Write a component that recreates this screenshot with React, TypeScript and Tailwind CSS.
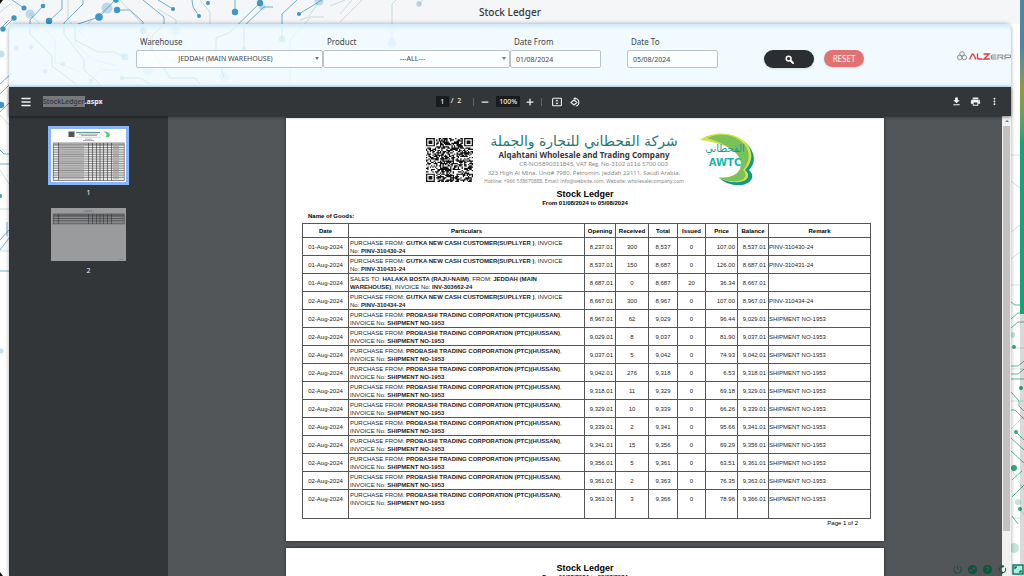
import { useMemo, useState } from 'react'
import { Menu, Minus, Plus, Search } from 'lucide-react'
import { MdAutorenew, MdFileDownload, MdHelp, MdMoreVert, MdPowerSettingsNew, MdPrint, MdSwapHorizontalCircle } from 'react-icons/md'

type Row = {
  date: string
  kind?: 'invoice' | 'sale'
  opening: string
  received: string
  total: string
  issued: string
  price: string
  balance: string
  remark: string
}

const SHIPMENT = 'SHIPMENT NO-1953'

const rows: Row[] = [
  { date: '01-Aug-2024', kind: 'invoice', opening: '8,237.01', received: '300', total: '8,537', issued: '0', price: '107.00', balance: '8,537.01', remark: 'PINV-310430-24' },
  { date: '01-Aug-2024', kind: 'invoice', opening: '8,537.01', received: '150', total: '8,687', issued: '0', price: '126.00', balance: '8,687.01', remark: 'PINV-310431-24' },
  { date: '01-Aug-2024', kind: 'sale', opening: '8,687.01', received: '0', total: '8,687', issued: '20', price: '36.34', balance: '8,667.01', remark: '' },
  { date: '02-Aug-2024', kind: 'invoice', opening: '8,667.01', received: '300', total: '8,967', issued: '0', price: '107.00', balance: '8,967.01', remark: 'PINV-310434-24' },
  { date: '02-Aug-2024', opening: '8,967.01', received: '62', total: '9,029', issued: '0', price: '96.44', balance: '9,029.01', remark: SHIPMENT },
  { date: '02-Aug-2024', opening: '9,029.01', received: '8', total: '9,037', issued: '0', price: '81.90', balance: '9,037.01', remark: SHIPMENT },
  { date: '02-Aug-2024', opening: '9,037.01', received: '5', total: '9,042', issued: '0', price: '74.93', balance: '9,042.01', remark: SHIPMENT },
  { date: '02-Aug-2024', opening: '9,042.01', received: '276', total: '9,318', issued: '0', price: '6.53', balance: '9,318.01', remark: SHIPMENT },
  { date: '02-Aug-2024', opening: '9,318.01', received: '11', total: '9,329', issued: '0', price: '69.18', balance: '9,329.01', remark: SHIPMENT },
  { date: '02-Aug-2024', opening: '9,329.01', received: '10', total: '9,339', issued: '0', price: '66.26', balance: '9,339.01', remark: SHIPMENT },
  { date: '02-Aug-2024', opening: '9,339.01', received: '2', total: '9,341', issued: '0', price: '95.66', balance: '9,341.01', remark: SHIPMENT },
  { date: '02-Aug-2024', opening: '9,341.01', received: '15', total: '9,356', issued: '0', price: '69.29', balance: '9,356.01', remark: SHIPMENT },
  { date: '02-Aug-2024', opening: '9,356.01', received: '5', total: '9,361', issued: '0', price: '63.51', balance: '9,361.01', remark: SHIPMENT },
  { date: '02-Aug-2024', opening: '9,361.01', received: '2', total: '9,363', issued: '0', price: '76.35', balance: '9,363.01', remark: SHIPMENT },
  { date: '02-Aug-2024', opening: '9,363.01', received: '3', total: '9,366', issued: '0', price: '78.96', balance: '9,366.01', remark: SHIPMENT },
]

// [x, y, radius, opacity]
const dots = [
  [24, 8, 2.5, 1], [43, 6, 2.3, 1], [14, 18, 2.7, 1], [3, 29, 2.7, 1], [49, 21, 3.2, 1], [99, 17, 3.8, 1],
  [30, 14, 4.5, 0.3], [107, 8, 5.5, 0.3], [117, 10, 3.2, 1], [116, 0, 2.8, 1], [143, 31, 3.2, 0.5], [173, 9, 2, 1],
  [199, 16, 2, 1], [208, 3, 2, 1], [235, 12, 3.2, 1], [260, 3, 3.2, 1], [244, 49, 2, 0.5], [282, 39, 3.2, 0.5],
  [299, 14, 2, 1], [319, 1, 4.5, 0.3], [262, 7, 3, 0.3], [419, 4, 2.7, 0.35], [392, 43, 4.5, 0.3], [176, 30, 4.5, 0.3],
  [16, 48, 2.5, 0.5], [31, 47, 2.2, 0.5], [63, 64, 2.2, 0.5], [45, 71, 2.2, 0.5], [125, 57, 3.5, 0.5], [91, 81, 2.3, 0.5],
  [122, 78, 2.2, 0.5], [174, 61, 3, 0.3], [148, 70, 5, 0.2], [224, 77, 5, 0.2], [1, 54, 3.5, 0.3], [1, 105, 3.2, 1],
  [0, 196, 2, 1], [1, 351, 2.5, 0.3],
]

function Circuits() {
  return (
    <svg className="absolute left-0 top-0" width="1024" height="576" viewBox="0 0 1024 576" fill="none" aria-hidden="true">
      <g stroke="#4f9cc6" strokeWidth="0.8">
        <path d="M24 8 12 0M43 6 30 20V34L52 56V66L76 84M14 18 3 29M62 0V9L49 21M83 0V4L64 23V34L84 60V70L100 84" />
        <path d="M99 17 115 0M99 17 75 25V40L98 52H114L125 57M117 10H130L143 22V31M143 0 164 17V24L152 36V50L170 78H195L200 84" />
        <path d="M158 0 173 9M192 0 193 7 199 16M235 12V0M260 3 229 33 216 38V52L224 77M282 39V14L297 0M299 14 322 0M273 7H264L244 26V49" />
        <path d="M0 29 9 20M0 84 12 73M0 94 14 80M0 112 9 103M0 150 4 154H9M0 164H9M0 240 9 230M0 250 9 238M0 271H9M7 222V236M122 78H140L150 84" />
      </g>
      <g stroke="#a9d0cf" strokeWidth="0.8" opacity="0.8">
        <path d="M0 12 10 4M30 14 55 40V62L80 72M107 8 75 34V44L94 60 118 66M120 0 148 30V48L174 61M68 0V20L84 36" />
        <path d="M158 9 176 20V30M340 22 362 0M340 14 352 0M309 16 320 0M300 20 309 17H324M392 43V4L396 0M419 4 423 0M290 84V40L310 18" />
        <path d="M200 0 210 12V24M330 6 345 0M0 115 9 125M0 170 9 184M0 209H9M0 251H9M91 81 100 70H120" />
      </g>
      {dots.map(([x, y, r, opacity], i) => (
        <circle key={i} cx={x} cy={y} r={r} fill="#3c96c7" opacity={opacity} />
      ))}
      <g stroke="#35a87b" strokeWidth="0.8">
        <g opacity="0.35">
          <path d="M1011 155H1020M1011 181 1020 188M1011 232 1020 225M1011 259 1020 252M1011 285H1024M1011 348H1024M1011 369H1024M1011 401H1024M1011 429 1024 416M1012 470 1024 490M1018 506 1024 515M1012 518H1020" />
        </g>
        <path d="M1011 302 1015 305H1020M1011 319 1018 313H1024M1011 328 1018 322H1024M1011 366H1018L1024 361M1011 374H1018L1024 369M1011 379H1024" />
        <path d="M1011 392 1019 401V406L1024 411M1011 410H1015L1024 419M1011 438 1024 450M1011 451 1024 463M1016 432 1024 440M1012 480 1022 471M1012 497 1024 485M1012 516 1018 524" />
      </g>
      <g fill="#35a87b">
        <circle cx="1014" cy="347" r="2" />
        <circle cx="1021" cy="388" r="2" />
        <circle cx="1016" cy="432" r="2" />
        <circle cx="1014" cy="468" r="3" />
        <circle cx="1020" cy="509" r="2" />
        <circle cx="1012" cy="335" r="3" opacity="0.3" />
        <circle cx="1018" cy="502" r="3" opacity="0.3" />
        <circle cx="1014" cy="548" r="5" opacity="0.3" />
      </g>
      <path d="M0 0H3L0 4ZM0 572 3 576H0Z" fill="#111" />
    </svg>
  )
}

function AlzLogo() {
  return (
    <svg className="ml-auto h-4 w-[54px] shrink-0" viewBox="1 0 54 16" fill="none" role="img" aria-label="ALZERP">
      <g stroke="#8b8e92" strokeWidth="1">
        <circle cx="6" cy="6" r="2.3" />
        <circle cx="3.7" cy="9.5" r="2.3" />
        <circle cx="8.3" cy="9.5" r="2.3" />
      </g>
      <g strokeWidth="1.4" stroke="#e23b3b">
        <path d="M13.5 11.5 16.2 6.3Q16.8 5.4 17.4 6.3L20 11.5" />
        <path d="M21.5 5.5V10Q21.5 11 22.5 11H26.5" />
        <path d="M27.5 6H33L28 11H33.8" />
      </g>
      <g stroke="#8b8e92" strokeWidth="1.1">
        <path d="M40.5 7H36.5Q35.2 7 35.2 9T36.5 11H40.5M35.2 9H40.3" />
        <path d="M42 11.5V7H46Q47 7 47 8T46 9.2H43.5M45 9.2 47.2 11.3" />
        <path d="M49 11.5V7H53.5Q54.8 7 54.8 8.2T53.5 9.6H49.5" />
      </g>
    </svg>
  )
}

function Filters() {
  const label = 'text-[8px] leading-3 text-[#3f4548] pl-1'
  const box = 'h-[18px] w-full rounded-[2px] border border-[#bcc3c7] bg-white/70 text-[7px] text-[#3f4548]'
  return (
    <form className="flex h-[63px] items-start rounded-t-md border-t border-[#d3ebf6] bg-[#ecf9ff]/80 pl-[127px] pt-[11px] shadow-[inset_0_-3px_3px_-1px_#c9e7f7,inset_0_3px_3px_-1px_#d5eefa]" onSubmit={e => e.preventDefault()}>
      <div className="flex w-[374px] shrink-0">
        <div className="relative flex flex-1 flex-col gap-0.5">
          <label htmlFor="warehouse" className={label}>Warehouse</label>
          <select id="warehouse" className={`${box} appearance-none pl-1 pr-3 [text-align-last:center]`}>
            <option>JEDDAH (MAIN WAREHOUSE)</option>
          </select>
          <span className="pointer-events-none absolute bottom-2 right-1 border-x-2 border-t-[3px] border-x-transparent border-t-[#777]" />
        </div>
        <div className="relative flex flex-1 flex-col gap-0.5">
          <label htmlFor="product" className={label}>Product</label>
          <select id="product" className={`${box} appearance-none pl-1 pr-3 [text-align-last:center]`}>
            <option>---ALL---</option>
          </select>
          <span className="pointer-events-none absolute bottom-2 right-1 border-x-2 border-t-[3px] border-x-transparent border-t-[#777]" />
        </div>
      </div>
      <div className="flex w-[91px] flex-col gap-0.5">
        <label htmlFor="from" className={label}>Date From</label>
        <input id="from" className={`${box} px-[5px]`} defaultValue="01/08/2024" />
      </div>
      <div className="ml-[26px] flex w-[91px] flex-col gap-0.5">
        <label htmlFor="to" className={label}>Date To</label>
        <input id="to" className={`${box} px-[5px]`} defaultValue="05/08/2024" />
      </div>
      <button aria-label="Search" className="ml-[46px] mt-3.5 flex h-[18px] w-[50px] items-center justify-center rounded-full bg-[#2b2e31] text-white shadow">
        <svg width="9" height="9" viewBox="0 0 9 9" fill="none" stroke="currentColor" aria-hidden="true">
          <circle cx="3.6" cy="3.6" r="2.4" strokeWidth="1.500" />
          <path d="M5.500 5.500 8 8" strokeWidth="1.900" strokeLinecap="round" />
        </svg>
      </button>
      <button type="reset" className="ml-2.5 mt-3.5 h-[17px] w-10 rounded-full bg-[#e07272] text-[8px] text-white shadow">RESET</button>
      <div className="mt-3 flex flex-1">
        <AlzLogo />
      </div>
    </form>
  )
}

function Toolbar() {
  const [page, setPage] = useState('1')
  return (
    <div className="relative z-10 grid h-[29px] grid-cols-[1fr_auto_1fr] items-center bg-[#323639] px-[11px] text-[7px] text-[#f1f1f1] shadow-[0_1px_3px_rgba(0,0,0,0.5)]">
      <div className="flex items-center gap-[11px]">
        <button aria-label="Menu"><Menu size={12} strokeWidth={3} /></button>
        <span className="pt-0.5 font-bold"><mark className="bg-[#77797b] py-px font-medium text-[#323639]">StockLedger</mark>.aspx</span>
      </div>
      <div className="mr-1 flex items-center">
        <input aria-label="Page" className="h-[11px] w-[13px] bg-[#191b1c] text-center font-medium" value={page} onChange={e => setPage(e.target.value)} />
        <span className="ml-0.5 whitespace-pre font-medium">/  2</span>
        <span className="ml-3 h-2 w-px bg-[#5f6366]" />
        <button aria-label="Zoom out" className="ml-1.5"><Minus size={10} strokeWidth={3} /></button>
        <input aria-label="Zoom" className="ml-1.5 h-[11px] w-6 bg-[#191b1c] text-center font-medium" defaultValue="100%" />
        <button aria-label="Zoom in" className="ml-[5px]"><Plus size={10} strokeWidth={3} /></button>
        <span className="ml-1.5 h-2 w-px bg-[#5f6366]" />
        <button aria-label="Fit to page" className="ml-2.5">
          <svg width="10" height="10" viewBox="0 0 10 10" fill="none" stroke="currentColor">
            <rect x="0.6" y="1.3" width="8.8" height="7.4" rx="0.8" strokeWidth="1.1" />
            <path d="M5 2.4 3.4 4.2H6.6ZM5 7.6 3.4 5.8H6.6Z" fill="currentColor" stroke="none" />
          </svg>
        </button>
        <button aria-label="Rotate" className="ml-2">
          <svg width="10" height="10" viewBox="0 0 10 10" fill="none" stroke="currentColor" strokeWidth="1.1">
            <path d="M4 3 1 5.5 4 8 7 5.5ZM4.5 1.5H5.2A3.9 3.9 0 0 1 5.8 9.2" />
            <path d="M5.4 0 3.4 1.6 5.4 3.2Z" fill="currentColor" stroke="none" />
          </svg>
        </button>
      </div>
      <div className="flex items-center justify-end gap-2">
        <button aria-label="Download"><MdFileDownload size={11} /></button>
        <button aria-label="Print"><MdPrint size={11} /></button>
        <button aria-label="More"><MdMoreVert size={11} /></button>
      </div>
    </div>
  )
}

function Thumbnail({ count, header, dim }: { count: number; header: boolean; dim?: boolean }) {
  const top = header ? 14 : 6
  const height = 3 + count * 2.3
  return (
    <svg width="75" height="53" viewBox="0 0 75 53" aria-hidden="true">
      <rect width="75" height="53" fill={dim ? '#9a9b9d' : '#fff'} />
      {header && (
        <>
          <rect x="17.5" y="2.5" width="6" height="5.5" fill="#555" />
          <path d="M25 3.5H49" stroke="#5f9c98" strokeWidth="1.2" />
          <path d="M28 5.2H47M30 6.5H46" stroke="#777" strokeWidth="0.6" />
          <path d="M25 8.2H50" stroke="#bbb" strokeWidth="0.6" />
          <path d="M52 2.5Q58 2 59 6 58.5 9 54.5 8 58 5 52 2.5Z" fill="#5cc46a" />
        </>
      )}
      <path d={header ? 'M34 10.2H41M32 11.5H43' : 'M34 2.5H41M32 3.7H43'} stroke="#777" strokeWidth="0.6" />
      <rect x="2.2" y={top} width="71" height={height} fill={dim ? '#85868a' : '#e8e8e8'} stroke="#444" strokeWidth="0.6" />
      <rect x="2.2" y={top} width="71" height="2" fill={dim ? '#666' : '#aaa'} />
      {Array.from({ length: count }, (_, i) => (
        <g key={i}>
          <path d={`M2 ${top + 2.2 + i * 2.3}H73`} stroke="#333" strokeWidth="0.5" />
          <path d={`M8 ${top + 3.4 + i * 2.3}H33M62 ${top + 3.4 + i * 2.3}H68`} stroke="#888" strokeWidth="0.6" />
        </g>
      ))}
      {[7.5, 37.5, 41.5, 45.5, 49, 52.5, 56.5, 60.5].map(x => (
        <path key={x} d={`M${x} ${top}V${top + height}`} stroke="#333" strokeWidth="0.6" />
      ))}
      <path d="M68 51.5H72" stroke="#777" strokeWidth="0.5" />
    </svg>
  )
}

function Sidebar() {
  return (
    <aside className="flex w-[159px] shrink-0 flex-col items-center bg-[#323639] pt-2.5 text-[7px] leading-3 text-[#f1f1f1]">
      <button aria-label="Page 1" className="border-[3px] border-[#8ab4f8]"><Thumbnail count={15} header /></button>
      <span className="mt-0.5">1</span>
      <button aria-label="Page 2" className="mt-[9px]"><Thumbnail count={3} header={false} dim /></button>
      <span className="mt-1">2</span>
    </aside>
  )
}

function QrCode() {
  const size = 37
  const path = useMemo(() => {
    let seed = 71
    let d = ''
    for (let y = 0; y < size; y++) {
      for (let x = 0; x < size; x++) {
        seed = (seed * 1103515245 + 12345) % 2147483648
        const corner = (x < 8 && y < 8) || (x > size - 9 && y < 8) || (x < 8 && y > size - 9)
        if (!corner && seed / 2147483648 > 0.44) d += `M${x} ${y}h1v1h-1z`
      }
    }
    for (const [x, y] of [[0, 0], [size - 7, 0], [0, size - 7]]) {
      d += `M${x} ${y}h7v7h-7zm1 1v5h5v-5zm1 1h3v3h-3z`
    }
    return d
  }, [])
  return (
    <svg width="47" height="44" viewBox={`0 0 ${size} ${size}`} preserveAspectRatio="none" role="img" aria-label="QR code">
      <path d={path} fill="#111" fillRule="evenodd" />
    </svg>
  )
}

function AwtcLogo() {
  return (
    <svg width="58" height="54" viewBox="0 0 58 54" role="img" aria-label="AWTC">
      <path d="M10 5C28-1 47 6 53 19 57 28 54 34 50 38 56 43 54 51 43 53 34 54 26 51 20 46 32 49 40 46 43 40 50 30 42 12 10 5Z" fill="#0d9a86" />
      <path d="M1 8C12-1 34-1 46 10 55 19 54 30 46 38 52 43 49 49 41 50 32 51 25 49 19 45 30 46 38 44 42 37 47 27 38 13 1 8Z" fill="#d3e04a" />
      <path d="M8 6C20 0 36 2 45 12 52 20 51 30 44 38 49 43 46 48 39 49 32 50 26 48 21 46 31 46 38 43 41 37 45 28 38 15 8 6Z" fill="#79c257" />
      <text x="26" y="20" textAnchor="middle" fontSize="10" fontFamily="'DejaVu Sans', sans-serif" fill="#1b9a90">القحطاني</text>
      <text x="26" y="34" textAnchor="middle" fontSize="10" fontWeight="bold" fontFamily="'DejaVu Sans', sans-serif" fill="#14b8b4">AWTC</text>
    </svg>
  )
}

function Letterhead() {
  return (
    <div className="flex justify-center pl-[13px]">
      <div className="pt-1.5"><QrCode /></div>
      <div className="ml-[11px] mr-[15px] flex w-[200px] flex-col items-center whitespace-nowrap text-[#8a8a8a]">
        <div lang="ar" dir="rtl" className="font-['DejaVu_Sans',sans-serif] text-[14px] leading-[18px] text-[#1f7a70]">شركة القحطاني للتجارة والجملة</div>
        <div className="font-['Noto_Sans',sans-serif] text-[8px] font-bold leading-[9px] text-[#3a3a3a]">Alqahtani Wholesale and Trading Company</div>
        <div className="self-end pr-4 font-[Lato,sans-serif] text-[6px] leading-[9px]">CR-NO5890311845, VAT Reg. No-3102 6116 5700 003</div>
        <div className="font-['Noto_Sans',sans-serif] text-[6px] leading-[10px]">323 High Al Mina, Unit# 7980, Petromin, Jeddah 22111, Saudi Arabia.</div>
        <div className="font-['Noto_Sans',sans-serif] text-[5px] leading-[6px]">Hotline: +966 538670888, Email: info@website.com, Website: wholesalecompany.com</div>
      </div>
      <AwtcLogo />
    </div>
  )
}

function Particulars({ row }: { row: Row }) {
  if (row.kind === 'sale') {
    return (
      <>
        SALES TO: <b>HALAKA BOSTA (RAJU-NAIM)</b>, FROM: <b>JEDDAH (MAIN</b><br />
        <b>WAREHOUSE)</b>, INVOICE No: <b>INV-303662-24</b>
      </>
    )
  }
  if (row.kind === 'invoice') {
    return (
      <>
        PURCHASE FROM: <b>GUTKA NEW CASH CUSTOMER(SUPLLYER )</b>, INVOICE<br />
        No: <b>{row.remark}</b>
      </>
    )
  }
  return (
    <>
      PURCHASE FROM: <b>PROBASHI TRADING CORPORATION (PTC)(HUSSAN)</b>,<br />
      INVOICE No: <b>{row.remark}</b>
    </>
  )
}

function Ledger() {
  const line = 'border border-[#555]'
  const cell = `${line} pt-[5px]`
  const widths = ['w-[46px]', 'w-[236px]', 'w-[31px]', 'w-[33px]', 'w-[29px]', 'w-[28px]', 'w-[32px]', 'w-[31px]', 'w-[102px]']
  return (
    <table className="w-full table-fixed border-collapse whitespace-nowrap text-center text-[6px] leading-[8px] text-[#1c1c1c]">
      <colgroup>
        {widths.map((w, i) => <col key={i} className={w} />)}
      </colgroup>
      <thead>
        <tr className="h-3.5 text-black">
          {['Date', 'Particulars', 'Opening', 'Received', 'Total', 'Issued', 'Price', 'Balance', 'Remark'].map(h => (
            <th key={h} className={`${line} font-bold`}>{h}</th>
          ))}
        </tr>
      </thead>
      <tbody className="align-top">
        {rows.map((r, i) => (
          <tr key={i} className="h-[18px] last:h-[29px]">
            <td className={cell}>{r.date}</td>
            <td className={`${line} pl-px pt-px text-left`}><Particulars row={r} /></td>
            <td className={`${cell} pr-0.5 text-right`}>{r.opening}</td>
            <td className={cell}>{r.received}</td>
            <td className={cell}>{r.total}</td>
            <td className={cell}>{r.issued}</td>
            <td className={`${cell} pr-0.5 text-right`}>{r.price}</td>
            <td className={`${cell} pr-0.5 text-right`}>{r.balance}</td>
            <td className={`${cell} text-left`}>{r.remark}</td>
          </tr>
        ))}
      </tbody>
    </table>
  )
}

function Heading() {
  return (
    <div className="text-center text-[6px] font-bold leading-[9px] text-black">
      <h2 className="text-[9px] leading-[10px]">Stock Ledger</h2>
      <p>From 01/08/2024 to 05/08/2024</p>
    </div>
  )
}

function Viewer() {
  return (
    <main className="flex flex-1 flex-col items-center overflow-hidden bg-[#525659] pt-0.5 font-['Liberation_Sans',Arial,sans-serif]">
      <article className="flex h-[423px] w-[598px] shrink-0 flex-col bg-white px-4 pt-3.5 shadow-[0_0_3px_rgba(0,0,0,0.6)]">
        <Letterhead />
        <div className="mt-[3px]"><Heading /></div>
        <p className="mb-0.5 mt-1 pl-1.5 text-[6px] font-bold leading-[9px] text-black">Name of Goods:</p>
        <Ledger />
        <p className="pr-2.5 text-right text-[6px] leading-[9px] text-black">Page 1 of 2</p>
      </article>
      <article className="mt-[7px] h-[423px] w-[598px] shrink-0 bg-white px-4 pt-[15px] shadow-[0_0_3px_rgba(0,0,0,0.6)]">
        <Heading />
      </article>
    </main>
  )
}

function QuickActions() {
  return (
    <div className="absolute bottom-px right-0 z-20 flex items-center gap-1 text-[#07583a]">
      <button aria-label="Power"><MdPowerSettingsNew size={11} /></button>
      <button aria-label="Switch"><MdSwapHorizontalCircle size={11} /></button>
      <button aria-label="Help"><MdHelp size={11} /></button>
      <button aria-label="Refresh"><MdAutorenew size={11} /></button>
      <button aria-label="Full screen" className="bg-[#a5f0e2]">
        <svg width="12" height="11" viewBox="0 0 12 11" fill="none" stroke="currentColor" strokeWidth="1.2">
          <rect x="1" y="1" width="10" height="9" />
          <path d="M3 5V3.2H5M9 6V7.8H7" />
        </svg>
      </button>
    </div>
  )
}

export default function App() {
  return (
    <div className="relative flex h-screen flex-col overflow-hidden bg-white font-['Noto_Sans',sans-serif]">
      <div className="absolute inset-x-0 top-0 h-6 bg-[#f4f6f8]" />
      <Circuits />
      <header className="relative flex h-6 items-center justify-center pr-1">
        <h1 className="text-[10px] font-medium text-[#33383b]">Stock Ledger</h1>
      </header>
      <div className="relative ml-[9px] mr-[13px] flex min-h-0 flex-1 flex-col rounded-t-md shadow-[0_0_4px_rgba(0,0,0,0.35)]">
        <Filters />
        <Toolbar />
        <div className="flex min-h-0 flex-1">
          <Sidebar />
          <Viewer />
          <div className="flex w-[9px] shrink-0 flex-col items-center bg-[#f1f1f1]">
            <span className="my-1 border-x-2 border-b-2 border-x-transparent border-b-[#777]" />
            <span className="h-[405px] w-[7px] bg-[#c1c1c1]" />
          </div>
        </div>
      </div>
      <div className="absolute inset-y-0 right-0 flex w-1 flex-col">
        <div className="h-[314px] bg-linear-to-b from-[#4b87a5] from-15% via-[#8f9a3f] via-29% to-[#14a377] to-45%" />
        <div className="flex-1 bg-black/15" />
      </div>
      <QuickActions />
    </div>
  )
}
